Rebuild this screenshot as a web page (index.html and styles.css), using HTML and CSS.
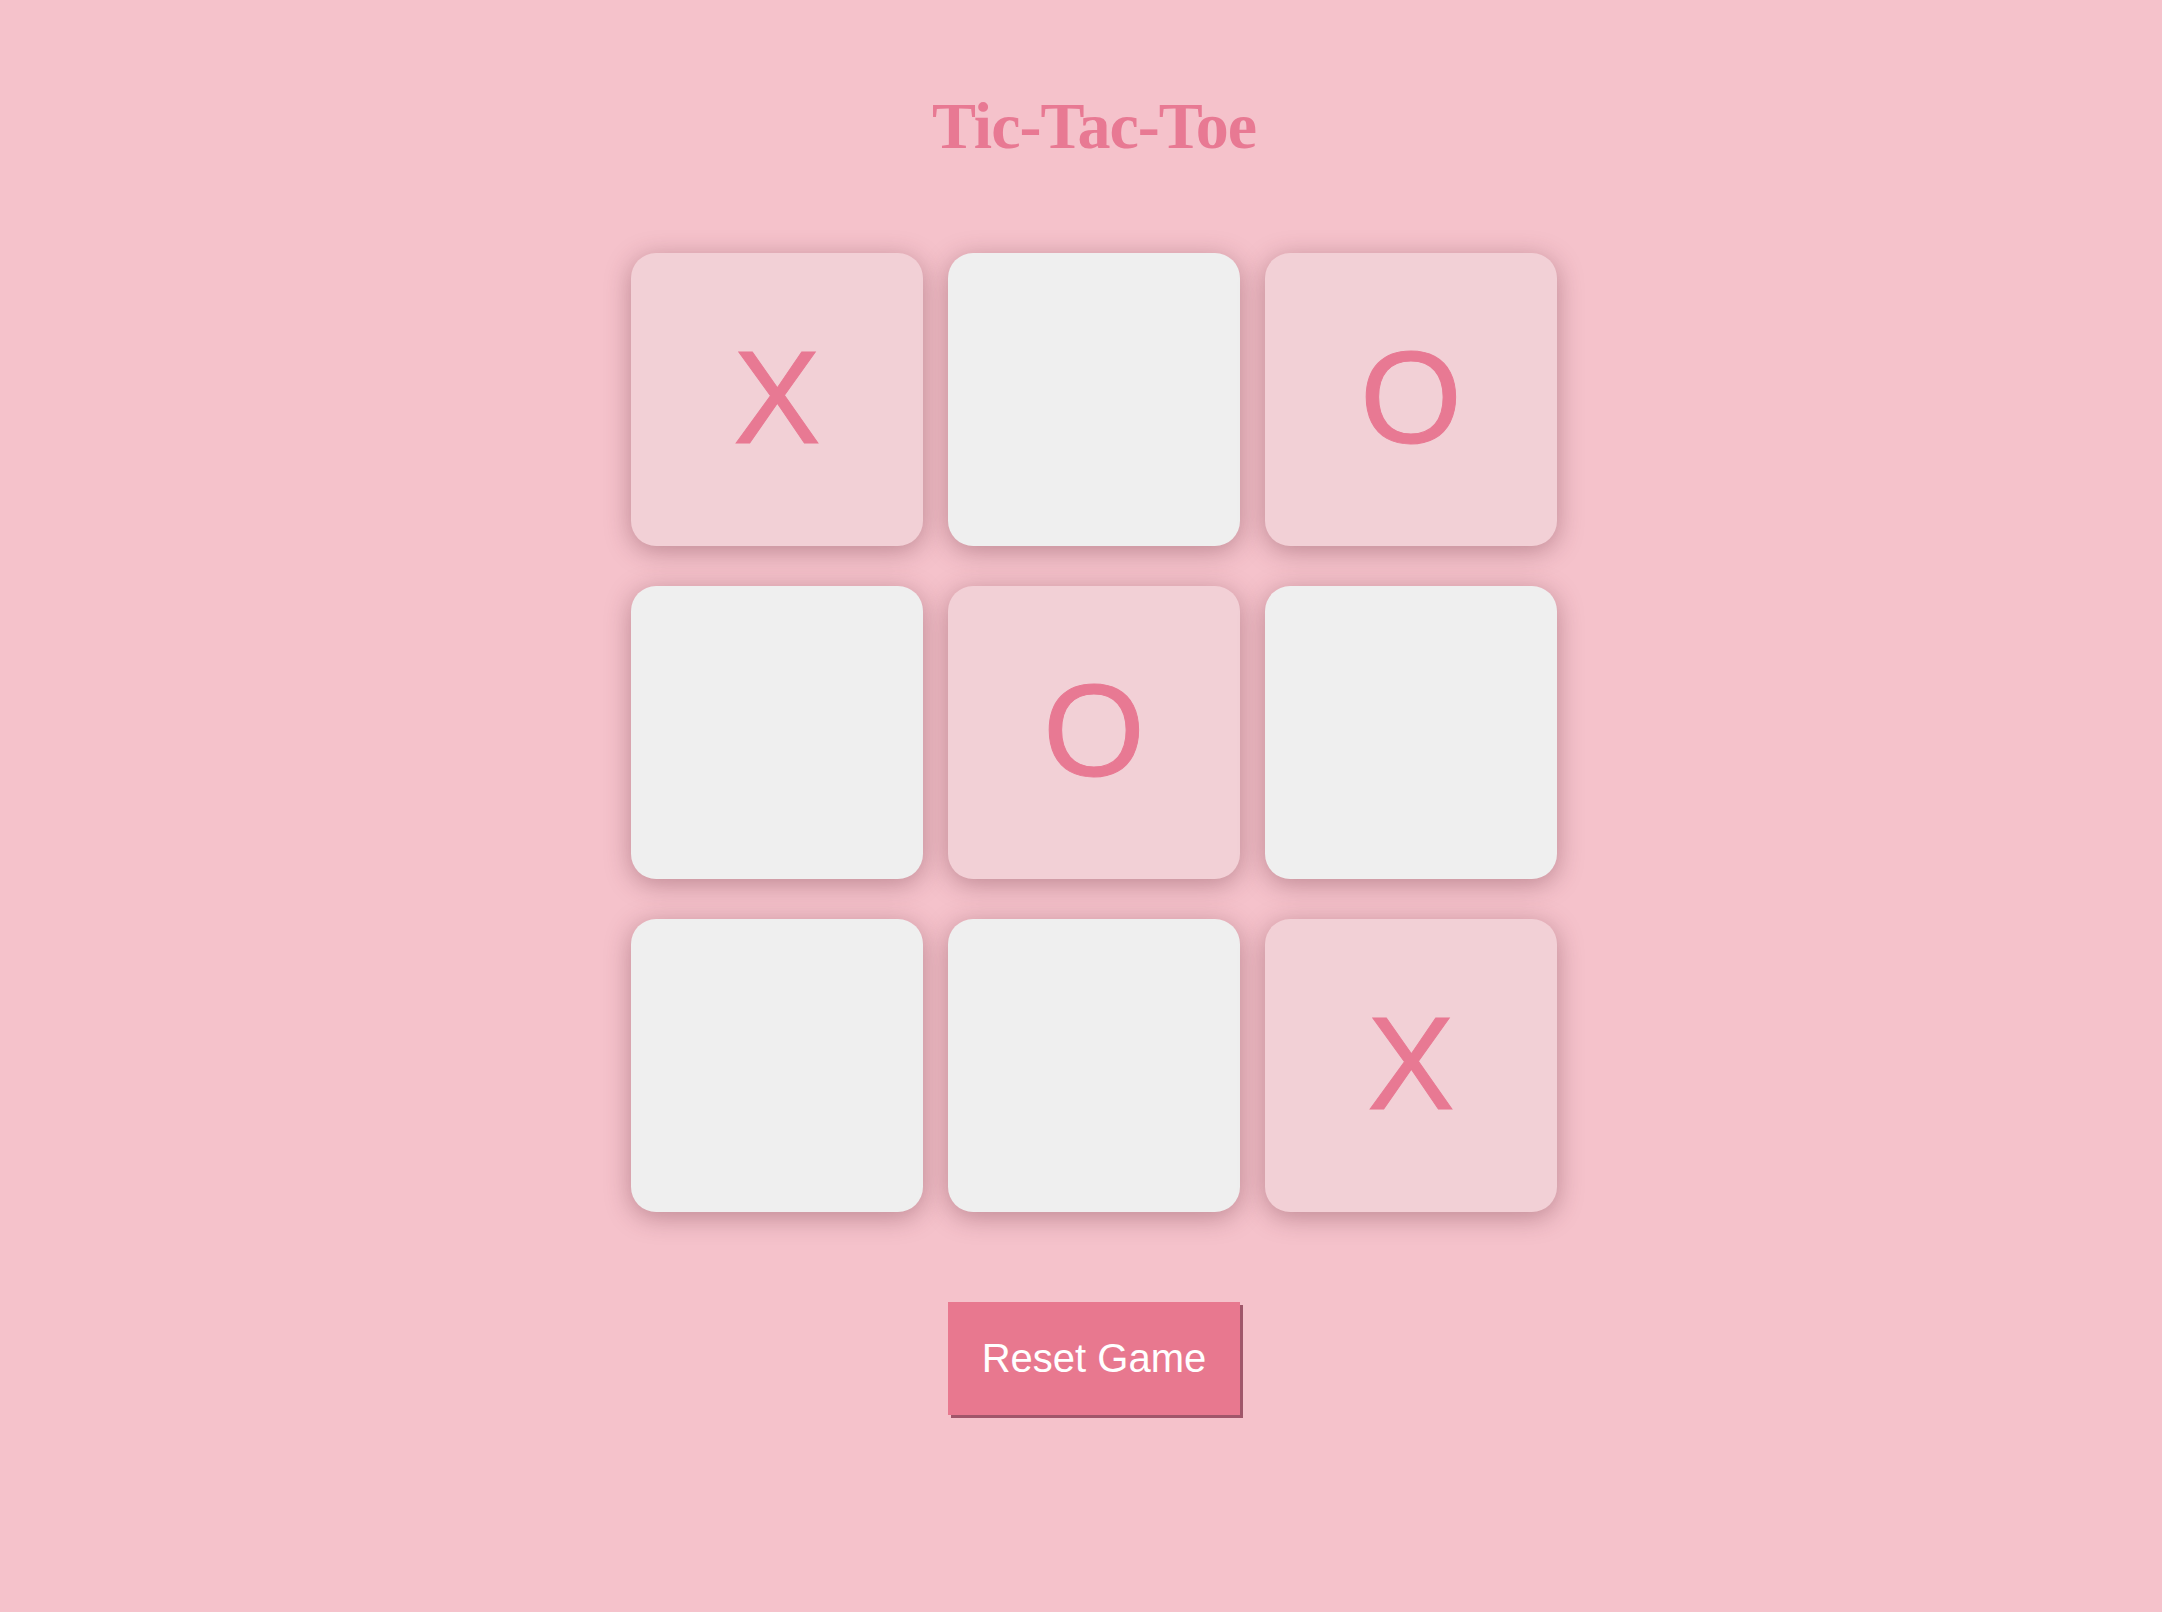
FILE: index.html
```html
<!DOCTYPE html>
<html>
<head>
<meta charset="utf-8">
<link rel="stylesheet" href="styles.css">
</head>
<body>
<main class="game">
  <h1 class="title">Tic-Tac-Toe</h1>
  <div class="board">
    <div class="cell filled">X</div>
    <div class="cell"></div>
    <div class="cell filled">O</div>
    <div class="cell"></div>
    <div class="cell filled">O</div>
    <div class="cell"></div>
    <div class="cell"></div>
    <div class="cell"></div>
    <div class="cell filled">X</div>
  </div>
  <button class="reset">Reset Game</button>
</main>
</body>
</html>
```
FILE: styles.css
```css
html, body {
  margin: 0;
  padding: 0;
}
body {
  background: #f5c2cb;
  min-height: 1612px;
  padding-left: 26px;
  box-sizing: border-box;
}
.game {
  display: flex;
  flex-direction: column;
  align-items: center;
}
.title {
  margin: 86px 0 0 0;
  font-family: "Liberation Serif", serif;
  font-weight: bold;
  font-size: 66px;
  line-height: 80px;
  color: #e87993;
  letter-spacing: -1px;
}
.board {
  margin-top: 87px;
  display: grid;
  grid-template-columns: repeat(3, 292px);
  grid-auto-rows: 293px;
  column-gap: 25px;
  row-gap: 40px;
}
.cell {
  background: #efefef;
  border-radius: 25px;
  box-shadow: 0 5px 26px rgba(90, 30, 45, 0.36);
  display: flex;
  align-items: center;
  justify-content: center;
  font-family: "Liberation Sans", Arial, sans-serif;
  font-size: 131px;
  line-height: 1;
  padding-bottom: 4px;
  box-sizing: border-box;
  color: #e87993;
  -webkit-text-stroke: 1px #e87993;
}
.cell.filled {
  background: #f2d0d6;
}
.reset {
  margin-top: 90px;
  width: 292px;
  height: 113px;
  border: none;
  background: #e8788f;
  color: #ffffff;
  font-family: "Liberation Sans", Arial, sans-serif;
  font-size: 40px;
  box-shadow: 3px 3px 0 #a0566a;
  cursor: pointer;
}
```
